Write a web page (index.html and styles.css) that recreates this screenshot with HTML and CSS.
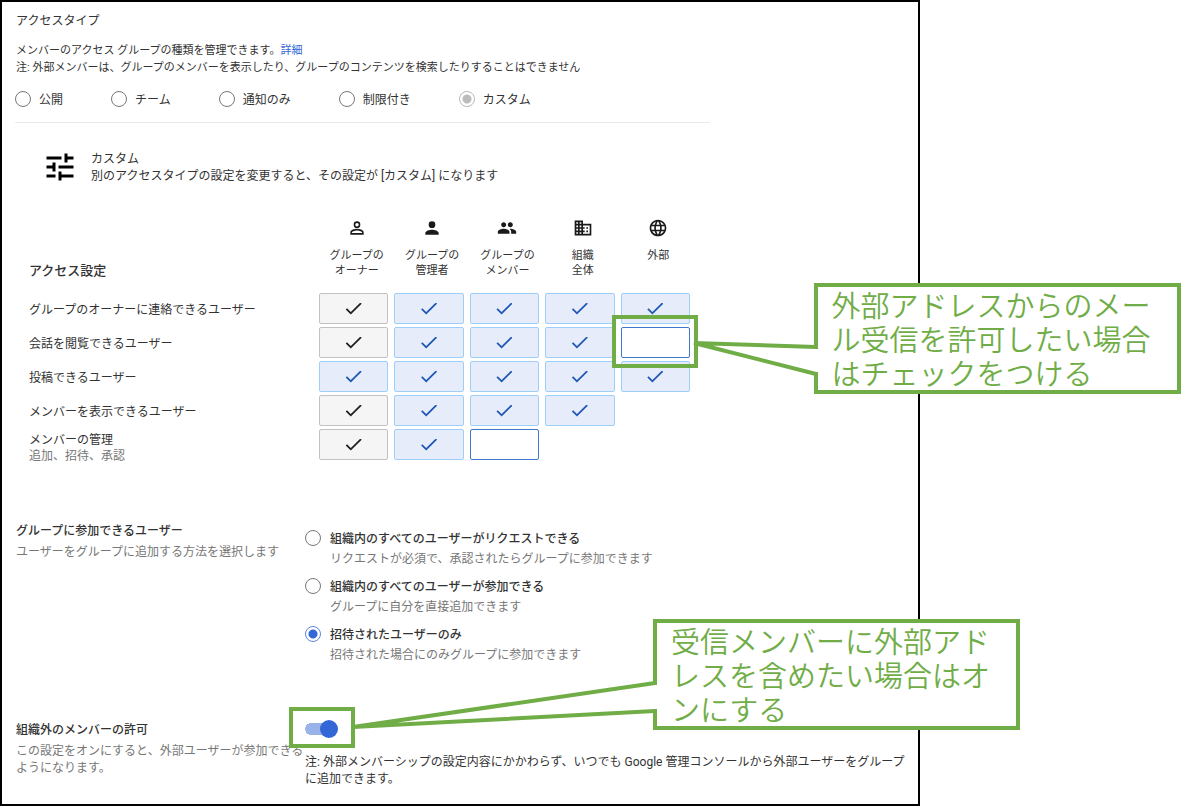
FILE: index.html
```html
<!DOCTYPE html>
<html lang="ja">
<head>
    <meta charset="utf-8">
    <title>アクセスタイプ</title>
    <link rel="stylesheet" href="styles.css">
</head>
<body>
    <main class="panel">
        <h1>アクセスタイプ</h1>
        <p class="intro">メンバーのアクセス グループの種類を管理できます。<a href="#">詳細</a><br>
        注: 外部メンバーは、グループのメンバーを表示したり、グループのコンテンツを検索したりすることはできません</p>

        <div class="access-types">
            <label><input type="radio" name="type"><span>公開</span></label>
            <label><input type="radio" name="type"><span>チーム</span></label>
            <label><input type="radio" name="type"><span>通知のみ</span></label>
            <label><input type="radio" name="type"><span>制限付き</span></label>
            <label><input type="radio" name="type" class="muted" checked><span>カスタム</span></label>
        </div>

        <div class="custom">
            <svg class="tune" viewBox="0 0 24 24"><path d="M3 17v2h6v-2H3zM3 5v2h10V5H3zm10 16v-2h8v-2h-8v-2h-2v6h2zM7 9v2H3v2h4v2h2V9H7zm14 4v-2H11v2h10zm-6-4h2V7h4V5h-4V3h-2v6z"/></svg>
            <p>カスタム<br>別のアクセスタイプの設定を変更すると、その設定が [カスタム] になります</p>
        </div>

        <table class="access">
            <thead>
                <tr>
                    <th class="name">アクセス設定</th>
                    <th><svg viewBox="0 0 24 24"><path d="M12 5.9a2.1 2.1 0 1 1 0 4.2 2.1 2.1 0 0 1 0-4.2m0 9c2.97 0 6.1 1.46 6.1 2.1v1.1H5.9V17c0-.64 3.13-2.1 6.1-2.1M12 4a4 4 0 1 0 0 8 4 4 0 0 0 0-8zm0 9c-2.67 0-8 1.34-8 4v3h16v-3c0-2.66-5.33-4-8-4z"/></svg>グループの<br>オーナー</th>
                    <th><svg viewBox="0 0 24 24"><path d="M12 12a4 4 0 1 0 0-8 4 4 0 0 0 0 8zm0 2c-2.67 0-8 1.34-8 4v2h16v-2c0-2.66-5.33-4-8-4z"/></svg>グループの<br>管理者</th>
                    <th><svg viewBox="0 0 24 24"><path d="M16 11c1.66 0 2.99-1.34 2.99-3S17.66 5 16 5s-3 1.34-3 3 1.34 3 3 3zm-8 0c1.66 0 2.99-1.34 2.99-3S9.66 5 8 5 5 6.34 5 8s1.34 3 3 3zm0 2c-2.33 0-7 1.17-7 3.5V19h14v-2.500C15 14.170 10.330 13 8 13zm8 0c-.29 0-.62.020-.97.050 1.160.840 1.970 1.970 1.970 3.450V19h6v-2.500c0-2.330-4.670-3.500-7-3.500z"/></svg>グループの<br>メンバー</th>
                    <th><svg viewBox="0 0 24 24"><path d="M12 7V3H2v18h20V7H12zM6 19H4v-2h2v2zm0-4H4v-2h2v2zm0-4H4V9h2v2zm0-4H4V5h2v2zm4 12H8v-2h2v2zm0-4H8v-2h2v2zm0-4H8V9h2v2zm0-4H8V5h2v2zm10 12h-8v-2h2v-2h-2v-2h2v-2h-2V9h8v10zm-2-8h-2v2h2v-2zm0 4h-2v2h2v-2z"/></svg>組織<br>全体</th>
                    <th><svg viewBox="0 0 24 24"><path d="M11.990 2C6.470 2 2 6.480 2 12s4.470 10 9.990 10C17.520 22 22 17.520 22 12S17.520 2 11.990 2zm6.930 6h-2.950c-.32-1.250-.78-2.450-1.380-3.560 1.840.630 3.370 1.910 4.330 3.560zM12 4.040c.83 1.200 1.480 2.530 1.910 3.960h-3.820c.43-1.430 1.080-2.760 1.910-3.960zM4.260 14C4.100 13.360 4 12.690 4 12s.1-1.360.26-2h3.380c-.08.660-.14 1.320-.14 2s.06 1.340.14 2H4.260zm.82 2h2.950c.32 1.250.78 2.450 1.380 3.560-1.840-.63-3.370-1.900-4.330-3.560zm2.950-8H5.080c.96-1.660 2.490-2.930 4.330-3.560C8.810 5.550 8.350 6.750 8.030 8zM12 19.960c-.83-1.200-1.480-2.530-1.910-3.960h3.820c-.43 1.430-1.080 2.760-1.910 3.960zM14.340 14H9.660c-.09-.66-.16-1.320-.16-2s.07-1.350.16-2h4.680c.09.650.16 1.320.16 2s-.07 1.340-.16 2zm.25 5.560c.6-1.110 1.060-2.310 1.380-3.560h2.950c-.96 1.650-2.490 2.930-4.330 3.560zM16.360 14c.08-.66.14-1.320.14-2s-.06-1.340-.14-2h3.380c.16.640.26 1.310.26 2s-.1 1.360-.26 2h-3.380z"/></svg>外部<br>&nbsp;</th>
                </tr>
            </thead>
            <tbody>
                <tr>
                    <th class="name">グループのオーナーに連絡できるユーザー</th>
                    <td><input type="checkbox" aria-label="オーナー" checked disabled></td>
                    <td><input type="checkbox" aria-label="管理者" checked></td>
                    <td><input type="checkbox" aria-label="メンバー" checked></td>
                    <td><input type="checkbox" aria-label="組織全体" checked></td>
                    <td><input type="checkbox" aria-label="外部" checked></td>
                </tr>
                <tr>
                    <th class="name">会話を閲覧できるユーザー</th>
                    <td><input type="checkbox" aria-label="オーナー" checked disabled></td>
                    <td><input type="checkbox" aria-label="管理者" checked></td>
                    <td><input type="checkbox" aria-label="メンバー" checked></td>
                    <td><input type="checkbox" aria-label="組織全体" checked></td>
                    <td>
                        <div class="anchor">
                            <input type="checkbox" aria-label="外部">
                            <span class="frame frame-cell"></span>
                            <div class="callout callout-cell">外部アドレスからのメール受信を許可したい場合はチェックをつける</div>
                            <svg class="tail tail-cell" viewBox="0 0 128 48"><path d="M128 13H126L4 9L126 40H128"/></svg>
                        </div>
                    </td>
                </tr>
                <tr>
                    <th class="name">投稿できるユーザー</th>
                    <td><input type="checkbox" aria-label="オーナー" checked></td>
                    <td><input type="checkbox" aria-label="管理者" checked></td>
                    <td><input type="checkbox" aria-label="メンバー" checked></td>
                    <td><input type="checkbox" aria-label="組織全体" checked></td>
                    <td><input type="checkbox" aria-label="外部" checked></td>
                </tr>
                <tr>
                    <th class="name">メンバーを表示できるユーザー</th>
                    <td><input type="checkbox" aria-label="オーナー" checked disabled></td>
                    <td><input type="checkbox" aria-label="管理者" checked></td>
                    <td><input type="checkbox" aria-label="メンバー" checked></td>
                    <td><input type="checkbox" aria-label="組織全体" checked></td>
                    <td></td>
                </tr>
                <tr>
                    <th class="name two-line">メンバーの管理<br><small>追加、招待、承認</small></th>
                    <td><input type="checkbox" aria-label="オーナー" checked disabled></td>
                    <td><input type="checkbox" aria-label="管理者" checked></td>
                    <td><input type="checkbox" aria-label="メンバー"></td>
                    <td></td>
                    <td></td>
                </tr>
            </tbody>
        </table>

        <section class="setting">
            <div>
                <h2>グループに参加できるユーザー</h2>
                <p class="hint">ユーザーをグループに追加する方法を選択します</p>
            </div>
            <div class="join">
                <div class="option">
                    <input type="radio" name="join" id="join-request">
                    <label for="join-request">組織内のすべてのユーザーがリクエストできる</label>
                    <p class="hint">リクエストが必須で、承認されたらグループに参加できます</p>
                </div>
                <div class="option">
                    <input type="radio" name="join" id="join-all">
                    <label for="join-all">組織内のすべてのユーザーが参加できる</label>
                    <p class="hint">グループに自分を直接追加できます</p>
                </div>
                <div class="option">
                    <input type="radio" name="join" id="join-invited" checked>
                    <label for="join-invited">招待されたユーザーのみ</label>
                    <p class="hint">招待された場合にのみグループに参加できます</p>
                </div>
            </div>
        </section>

        <section class="setting">
            <div>
                <h2><label for="external">組織外のメンバーの許可</label></h2>
                <p class="hint">この設定をオンにすると、外部ユーザーが参加できるようになります。</p>
            </div>
            <div>
                <div class="anchor">
                    <input type="checkbox" role="switch" class="switch" id="external" checked>
                    <span class="frame frame-switch"></span>
                    <div class="callout callout-switch">受信メンバーに外部アドレスを含めたい場合はオンにする</div>
                    <svg class="tail tail-switch" viewBox="0 0 308 60"><path d="M308 13H306L4 57L306 41H308"/></svg>
                </div>
                <p class="note">注: 外部メンバーシップの設定内容にかかわらず、いつでも Google 管理コンソールから外部ユーザーをグループに追加できます。</p>
            </div>
        </section>
    </main>
</body>
</html>
```

FILE: styles.css
```css
* {
    box-sizing: border-box;
}
body {
    margin: 0;
    background: white;
    color: #333;
    font-family: Roboto, "Noto Sans CJK JP", sans-serif;
    font-size: 12px;
    line-height: 17px;
}
h1, h2, p {
    margin: 0;
    font-size: 12px;
    font-weight: 400;
}
a {
    color: #3367d6;
    text-decoration: none;
}
.panel {
    max-width: 920px;
    padding: 11px 8px 16px 13px;
    border: 2px solid black;
}
.panel h1 {
    padding-left: 1px;
}
.intro {
    margin-top: 12px;
    padding-left: 1px;
    font-size: 11px;
}

/* radio buttons */
input {
    margin: 0;
    appearance: none;
}
input[type="radio"] {
    width: 16px;
    height: 16px;
    flex: none;
    border: 1px solid #777;
    border-radius: 50%;
}
input[type="radio"]:checked {
    border-color: #5c86e0;
    background: radial-gradient(circle, #3367d6 4px, white 5px);
}
input[type="radio"].muted {
    border-color: #b8b8b8;
    background: radial-gradient(circle, #bbb 4px, white 5px);
}
.access-types {
    display: flex;
    gap: 48px;
    max-width: 695px;
    margin-top: 15px;
    padding-bottom: 13px;
    border-bottom: 1px solid #ebebeb;
}
.access-types label {
    display: flex;
    gap: 8px;
}
.access-types span {
    padding-top: 1px;
}

.custom {
    display: flex;
    align-items: center;
    gap: 13px;
    margin-top: 26px;
    padding-left: 27px;
}
.custom p {
    padding-top: 2px;
}
.tune {
    width: 36px;
    height: 36px;
}

/* permission table */
.access {
    width: 673px;
    margin: 30px 0 0 8px;
    table-layout: fixed;
    border-spacing: 6px 3px;
}
.access th {
    padding: 0;
    font-weight: 400;
}
.access thead th {
    padding: 0 0 12px 6px;
    font-size: 11px;
    line-height: 15px;
    vertical-align: bottom;
}
.access thead svg {
    display: block;
    width: 20px;
    height: 20px;
    margin: 0 auto 10px;
    fill: #1a1a1a;
}
.access .name {
    width: 284px;
    text-align: left;
}
.access thead .name {
    padding-left: 0;
    font-size: 13px;
    font-weight: 500;
}
.access tbody .name {
    padding-top: 3px;
}
.access .two-line {
    line-height: 16px;
}
.access small {
    color: #777;
    font-size: 12px;
}
.access td {
    padding: 0;
    vertical-align: top;
}
.access input {
    display: block;
    width: 100%;
    height: 31px;
    border: 1px solid #3d78cc;
    border-radius: 2px;
    background: white;
}
.access input:checked {
    display: grid;
    place-items: center;
    border-color: #9dcffa;
    background: #e6ecfa;
    color: #2058b5;
}
.access input:disabled {
    border-color: #c2c2c2;
    background: #f5f5f5;
    color: #222;
}
.access input:checked::before {
    content: "";
    width: 16px;
    height: 12px;
    background: currentColor;
    clip-path: polygon(32% 79%, 8% 48%, 0 58%, 32% 100%, 100% 10%, 92% 0);
}

/* lower settings */
.setting {
    display: grid;
    grid-template-columns: 289px 1fr;
    margin-top: 54px;
    padding-left: 1px;
}
.setting + .setting {
    margin-top: 56px;
}
.setting h2 {
    margin-bottom: 4px;
    padding-top: 2px;
    font-weight: 500;
}
.hint {
    color: #777;
}
.join {
    display: grid;
    gap: 10px;
    padding-top: 9px;
}
.option {
    display: grid;
    grid-template-columns: 16px 1fr;
    gap: 3px 9px;
}
.option label {
    padding-top: 1px;
    font-weight: 500;
}
.option .hint {
    grid-column: 2;
}
.note {
    margin-top: 16px;
}
.switch {
    display: flex;
    align-items: center;
    justify-content: flex-end;
    width: 33px;
    height: 18px;
    border-radius: 9px;
    background:
        radial-gradient(circle at 6px 9px, #99b3ea 6px, transparent 6px),
        linear-gradient(#99b3ea, #99b3ea) 6px center / 22px 12px no-repeat;
}
.switch::before {
    content: "";
    width: 18px;
    height: 18px;
    border-radius: 50%;
    background: #3367d6;
}

/* green annotations over the panel */
.anchor {
    position: relative;
}
.frame {
    position: absolute;
    border: 4px solid #70ad47;
    pointer-events: none;
}
.callout {
    position: absolute;
    z-index: 1;
    width: 367px;
    height: 111px;
    padding: 0 14px;
    border: 4px solid #70ad47;
    background: white;
    color: #70ad47;
    font-family: "Noto Sans CJK JP", sans-serif;
    font-size: 29px;
    font-weight: 350;
    line-height: 34px;
}
.tail {
    position: absolute;
    z-index: 2;
    fill: white;
    stroke: #70ad47;
    stroke-width: 4;
    stroke-linejoin: bevel;
    pointer-events: none;
}
.frame-cell {
    top: -12px;
    left: -9px;
    width: 86px;
    height: 53px;
}
.callout-cell {
    top: -44px;
    left: 193px;
}
.tail-cell {
    top: 7px;
    left: 69px;
    width: 128px;
    height: 48px;
}
.frame-switch {
    top: -13px;
    left: -16px;
    width: 66px;
    height: 41px;
}
.callout-switch {
    top: -101px;
    left: 348px;
}
.tail-switch {
    top: -50px;
    left: 44px;
    width: 308px;
    height: 60px;
}
```
